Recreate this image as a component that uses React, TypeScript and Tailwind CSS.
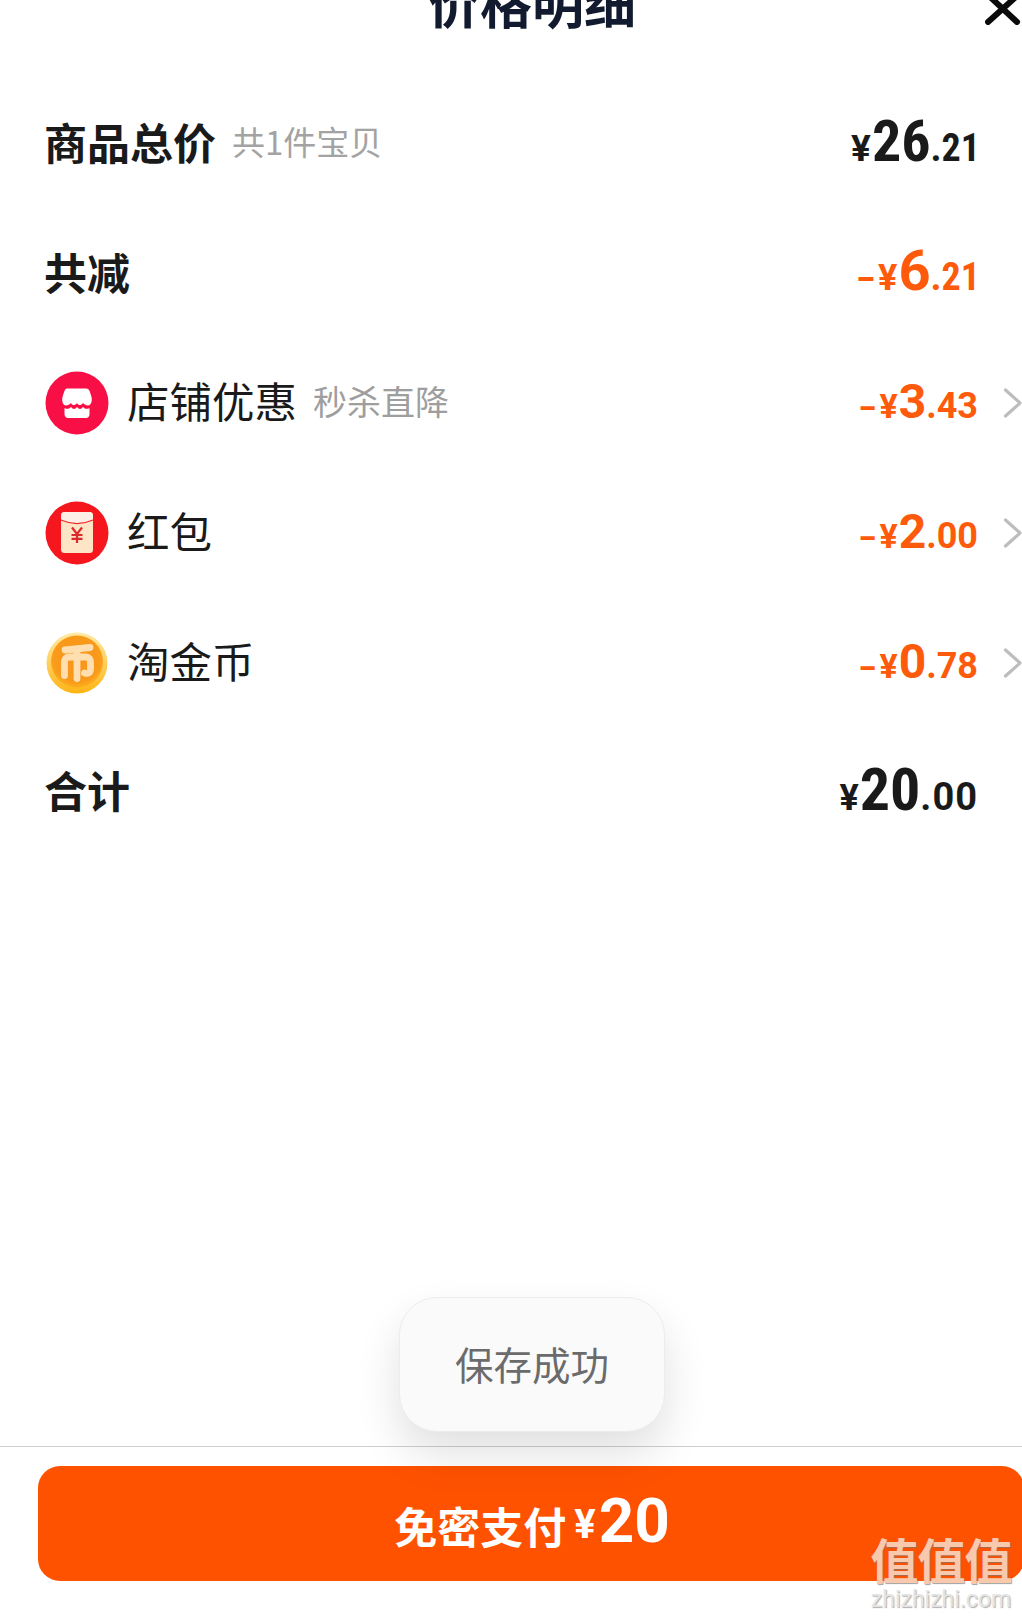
const NUM = "font-['Roboto','Liberation_Sans',sans-serif]";
const CJK = "font-['Noto_Sans_CJK_SC','Noto_Sans',sans-serif]";

function Amount({ minus, big, small, color, bigClass, smallClass, yen, pad = "pb-[4px]" }: { minus?: boolean; big: string; small: string; color: string; bigClass: string; smallClass: string; yen: string; pad?: string }) {
  return (
    <span className={`inline-flex items-baseline font-bold leading-none ${pad} ${NUM} ${color}`}>
      {minus && <span className={`inline-block scale-x-[1.5] mr-[5px] ${yen}`}>-</span>}
      <span className={`mr-[1px] ${yen}`}>¥</span>
      <span className={bigClass}>{big}</span>
      <span className={smallClass}>.{small}</span>
    </span>
  );
}

function Chevron() {
  return (
    <svg width="20" height="30" viewBox="0 0 20 30" fill="none" className="shrink-0">
      <path d="M2.500 2 L17 15 L2.500 28" stroke="#bdbdbd" strokeWidth="3.200" strokeLinecap="round" strokeLinejoin="round" />
    </svg>
  );
}

function StoreIcon() {
  return (
    <svg width="64" height="64" viewBox="0 0 64 64" className="shrink-0">
      <circle cx="32" cy="32" r="31.500" fill="#f80f46" />
      <path d="M22 17.500 H41 C43 17.500 44 18.500 44.800 20.500 L46.500 26 C47.500 30 46 34.500 43 34.500 C41 34.500 39.500 33.500 38 32 C36 34.800 33.500 34.800 32 32 C30 34.800 27.500 34.800 26 32 C24.500 33.500 23 34.500 21 34.500 C18 34.500 16.500 30 17.500 26 L19.200 20.500 C20 18.500 21 17.500 22 17.500 Z" fill="#fff" />
      <path d="M19.500 37 C22 38.500 24 38 26 36 C28 38.600 30 38.600 32 36 C34 38.600 36 38.600 38 36 C40 38 42 38.500 44.500 37 V43 C44.500 45.500 43 47 41 47 H23 C21 47 19.500 45.500 19.500 43 Z" fill="#fff" />
    </svg>
  );
}

function EnvelopeIcon() {
  return (
    <svg width="64" height="64" viewBox="0 0 64 64" className="shrink-0">
      <circle cx="32" cy="32" r="31.500" fill="#f6161e" />
      <rect x="16" y="11" width="32" height="41" rx="3.500" fill="#fde5c6" />
      <path d="M16 14.500 C16 12.500 17.500 11 19.500 11 H44.500 C46.500 11 48 12.500 48 14.500 V19 C38 23.500 26 23.500 16 19 Z" fill="#fdeee6" />
      <path d="M16 19 C26 23.500 38 23.500 48 19" stroke="#ee2a2a" strokeWidth="1.200" fill="none" />
      <path d="M27 26.500 L32 33 L37 26.500 M32 33 V42 M26.500 34 H37.500 M26.500 37.800 H37.500" stroke="#dd2a2a" strokeWidth="2.200" fill="none" />
    </svg>
  );
}

function CoinIcon() {
  return (
    <svg width="64" height="64" viewBox="0 0 64 64" className="shrink-0">
      <defs>
        <linearGradient id="rim" x1="0" y1="0" x2="0" y2="1">
          <stop offset="0" stopColor="#ffeaa6" />
          <stop offset="1" stopColor="#ffb414" />
        </linearGradient>
        <radialGradient id="face" cx="0.500" cy="0.450" r="0.550">
          <stop offset="0" stopColor="#f8951c" />
          <stop offset="0.800" stopColor="#f99a1a" />
          <stop offset="1" stopColor="#fcae1e" />
        </radialGradient>
      </defs>
      <circle cx="32" cy="32" r="30.500" fill="url(#rim)" />
      <circle cx="32" cy="30.500" r="26" fill="url(#face)" />
      <path d="M20 19 L45 16.500 M32 18 V47.500 M19.500 44.500 V31 C19.500 28 21 26 24 26 H41 C44 26 45.500 28 45.500 31 V38 C45.500 42 43 43 39.500 42" stroke="#ffdfb0" strokeWidth="6.800" fill="none" strokeLinecap="round" strokeLinejoin="round" />
    </svg>
  );
}

function Label({ text, pad = "pb-[4px]" }: { text: string; pad?: string }) {
  return <span className={`text-[43px] leading-none font-bold text-[#1a1a1a] ${pad}`}>{text}</span>;
}

function Row({ children, right }: { children: React.ReactNode; right: React.ReactNode }) {
  return (
    <div className="h-[130px] flex items-center justify-between pl-[44px] pr-[84px]">
      <div className="flex items-center">{children}</div>
      {right}
    </div>
  );
}

function DiscountRow({ icon, label, note, amount }: { icon: React.ReactNode; label: string; note?: string; amount: React.ReactNode }) {
  return (
    <div className="h-[130px] flex items-center justify-between pl-[45px] pr-[41px]">
      <div className="flex items-center">
        {icon}
        <span className="ml-[18px] text-[42.500px] leading-none pb-[5px] text-[#1a1a1a]">{label}</span>
        {note && <span className="ml-[16px] text-[34px] leading-none pb-[5px] text-[#9e9e9e]">{note}</span>}
      </div>
      <div className="flex items-center gap-[25px]">
        {amount}
        <Chevron />
      </div>
    </div>
  );
}

export default function App() {
  const orange = "text-[#fe5a0c]";
  return (
    <div className={`relative w-[1022px] h-[1617px] overflow-hidden bg-white ${CJK}`}>
      <div className="w-[1064px] flex flex-col h-full">
        <header className="relative h-[78px] flex justify-center">
          <h1 className="text-[52px] leading-none font-bold text-[#111a2e] mt-[-24px]">价格明细</h1>
          <svg width="36" height="30" viewBox="0 0 36 30" className="absolute left-[985px] top-[-5px]" fill="none">
            <path d="M3 0 L32 27 M33 0 L3 27" stroke="#0b0b0b" strokeWidth="6" strokeLinecap="round" />
          </svg>
        </header>

        <Row
          right={<Amount big="26" small="21" color="text-[#1a1a1a]" bigClass="text-[58px] [font-stretch:80%]" smallClass="text-[38px] [font-stretch:80%]" yen="text-[37px]" />}
        >
          <Label text="商品总价" />
          <span className="ml-[16px] text-[33px] leading-none pb-[4px] text-[#a3a3a3]">共1件宝贝</span>
        </Row>
        <Row
          right={<Amount minus big="6" small="21" color={orange} bigClass="text-[56px] [font-stretch:90%]" smallClass="text-[38px] [font-stretch:75%]" yen="text-[36px]" />}
        >
          <Label text="共减" />
        </Row>
        <DiscountRow
          icon={<StoreIcon />}
          label="店铺优惠"
          note="秒杀直降"
          amount={<Amount minus big="3" small="43" color={orange} bigClass="text-[48px] [font-stretch:95%]" smallClass="text-[36px]" yen="text-[34px]" pad="pb-[2px]" />}
        />
        <DiscountRow
          icon={<EnvelopeIcon />}
          label="红包"
          amount={<Amount minus big="2" small="00" color={orange} bigClass="text-[48px] [font-stretch:95%]" smallClass="text-[36px]" yen="text-[34px]" pad="pb-[2px]" />}
        />
        <DiscountRow
          icon={<CoinIcon />}
          label="淘金币"
          amount={<Amount minus big="0" small="78" color={orange} bigClass="text-[48px] [font-stretch:95%]" smallClass="text-[36px] [font-stretch:90%]" yen="text-[34px]" pad="pb-[2px]" />}
        />
        <Row
          right={<Amount big="20" small="00" color="text-[#1a1a1a]" bigClass="text-[60px] [font-stretch:82%]" smallClass="text-[38px] tracking-[1px] mr-[2px]" yen="text-[36px]" pad="pb-[6px]" />}
        >
          <Label text="合计" pad="pb-[7px]" />
        </Row>

        <div className="flex-1" />

        <footer className="h-[171px] border-t border-[#cfcfcf] pl-[38px] pt-[19px] shrink-0">
          <button className="w-[986px] h-[115px] pt-[3px] rounded-[22px] bg-[#fe5200] flex items-center justify-center text-white font-bold">
            <span className="text-[43px] leading-none ml-[2px]">免密支付</span>
            <span className={`ml-[8px] text-[40px] leading-none ${NUM}`}>¥</span>
            <span className={`ml-[3px] text-[62px] leading-none [font-stretch:92%] ${NUM} -mt-[8px]`}>20</span>
          </button>
        </footer>
      </div>

      <div className="absolute left-[399px] top-[1297px] w-[266px] h-[135px] rounded-[38px] bg-[#fafafa] border border-[#ececec] shadow-[0_22px_44px_rgba(0,0,0,0.12)] flex items-center justify-center">
        <span className="text-[38.500px] leading-none pb-[2px] text-[#6b6b6b]">保存成功</span>
      </div>

      <div className="absolute left-[866px] top-[1534px] w-[150px] flex flex-col items-center">
        <span className="text-[48px] leading-none font-bold tracking-[-1px] text-[#f9c9ae] [text-shadow:1px_1px_1px_rgba(120,120,120,0.7)]">值值值</span>
        <span className={`text-[23px] leading-none mt-[6px] text-[#e4e4e4] [text-shadow:1px_1px_1px_rgba(120,120,120,0.6)] ${NUM}`}>zhizhizhi.com</span>
      </div>
    </div>
  );
}
